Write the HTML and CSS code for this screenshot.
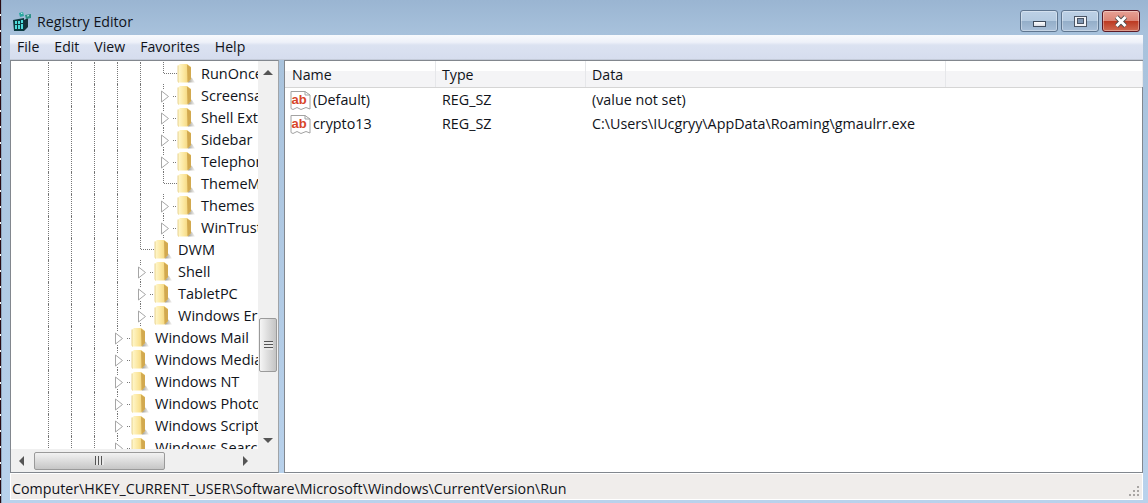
FILE: index.html
```html
<!DOCTYPE html>
<html lang="en">
<head>
<meta charset="utf-8">
<title>Registry Editor</title>
<link rel="stylesheet" href="styles.css">
</head>
<body>
<svg class="defs" aria-hidden="true">
  <defs>
    <linearGradient id="fold" x1="0" y1="0" x2="1" y2="0">
      <stop offset="0" stop-color="#fff8cf"/><stop offset=".5" stop-color="#fbe59a"/><stop offset="1" stop-color="#eccb6e"/>
    </linearGradient>
    <linearGradient id="shade" x1="0" y1="0" x2="1" y2="0">
      <stop offset="0" stop-color="#7f7b70" stop-opacity=".85"/><stop offset="1" stop-color="#b5b2a8" stop-opacity=".15"/>
    </linearGradient>
    <symbol id="folder" viewBox="0 0 18 20" overflow="visible">
      <path d="M11 13 L15 15 L18 19.5 L11 19.5 Z" fill="url(#shade)"/>
      <path d="M1 2.5 L3 1 L10 1 L14 4 L14 16 L10.5 19.5 L1.5 19.5 L1 18 Z" fill="url(#fold)"/>
      <path d="M10 1.5 L14 4.5 L14 16 L10.5 19.5 Z" fill="#d2a94f"/>
      <path d="M1 2.5 L1 18 L1.5 19.5" fill="none" stroke="#e2c878" stroke-width=".8"/>
    </symbol>
    <symbol id="exp" viewBox="0 0 23 22" overflow="visible">
      <path d="M0.5 0 V5 M0.5 19 V22" stroke="#777" stroke-dasharray="1 1" fill="none"/>
      <path d="M10 12.5 H14" stroke="#777" stroke-dasharray="1 1" fill="none"/>
      <path d="M-1.5 7 L5.5 12.5 L-1.5 18 Z" fill="#fff" stroke="#a6a6a6"/>
    </symbol>
    <symbol id="leaf" viewBox="0 0 23 22" overflow="visible">
      <path d="M0.5 0 V11.5 H14" stroke="#777" stroke-dasharray="1 1" fill="none"/>
    </symbol>
    <symbol id="sz" viewBox="0 0 21 21">
      <path d="M1 1.5 H15 L20 5 V19 L16 17.5 L11 19.5 L7 17.5 L3 19.5 L1 18.5 Z" fill="#fff" stroke="#a2a2a2"/>
      <path d="M15 1.5 V5 H20" fill="none" stroke="#a2a2a2"/>
      <text x="1.5" y="13.5" class="ab">ab</text>
    </symbol>
  </defs>
</svg>
<div class="window">
  <header class="titlebar">
    <svg class="appicon" width="21" height="21" viewBox="0 0 21 21">
      <path d="M1 9 L12 7 L12 20 L2 20 Z" fill="#0c3a40"/>
      <path d="M3 10 H5 V13 H3 Z M6 10 H8 V13 H6 Z M9 9 H11 V12 H9 Z M3 14 H5 V18 H3 Z M6 14 H8 V18 H6 Z M9 13 H11 V18 H9 Z" fill="#4fdcdc"/>
      <path d="M12 9 L16 7 L16 16 L12 20 Z" fill="#173238"/>
      <path d="M7 2 L11 1 L12 5 L8 6 Z" fill="#2aa7a0"/>
      <path d="M13 4 L19 3 L19 7 L14 8 Z" fill="#2f8f86"/>
      <path d="M9 2.5 L10.5 2.2 M15 5 L17 4.6" stroke="#c6f0ec"/>
    </svg>
    <span class="title">Registry Editor</span>
    <div class="caption">
      <div class="cbtn"><span class="gmin"></span></div>
      <div class="cbtn"><span class="gmax"></span></div>
      <div class="cbtn close">
        <svg width="14" height="13" viewBox="0 0 14 13"><path d="M2.5 2 L11.5 11 M11.5 2 L2.5 11" stroke="#4c4c4c" stroke-width="4.6"/><path d="M2.5 2 L11.5 11 M11.5 2 L2.5 11" stroke="#fff" stroke-width="3"/></svg>
      </div>
    </div>
  </header>
  <nav class="menubar">
    <span class="mi">File</span><span class="mi">Edit</span><span class="mi">View</span><span class="mi">Favorites</span><span class="mi">Help</span>
  </nav>
  <main class="client">
    <section class="treepane">
      <div class="treetop">
        <div class="tree">
          <div class="row"><i class="g"></i><i class="g"></i><i class="g"></i><i class="g"></i><i class="g"></i><svg class="tw"><use href="#leaf"/></svg><svg class="fo"><use href="#folder"/></svg><span class="lb">RunOnce</span></div>
          <div class="row"><i class="g"></i><i class="g"></i><i class="g"></i><i class="g"></i><i class="g"></i><svg class="tw"><use href="#exp"/></svg><svg class="fo"><use href="#folder"/></svg><span class="lb">Screensavers</span></div>
          <div class="row"><i class="g"></i><i class="g"></i><i class="g"></i><i class="g"></i><i class="g"></i><svg class="tw"><use href="#exp"/></svg><svg class="fo"><use href="#folder"/></svg><span class="lb">Shell Extensions</span></div>
          <div class="row"><i class="g"></i><i class="g"></i><i class="g"></i><i class="g"></i><i class="g"></i><svg class="tw"><use href="#exp"/></svg><svg class="fo"><use href="#folder"/></svg><span class="lb">Sidebar</span></div>
          <div class="row"><i class="g"></i><i class="g"></i><i class="g"></i><i class="g"></i><i class="g"></i><svg class="tw"><use href="#exp"/></svg><svg class="fo"><use href="#folder"/></svg><span class="lb">Telephony</span></div>
          <div class="row"><i class="g"></i><i class="g"></i><i class="g"></i><i class="g"></i><i class="g"></i><svg class="tw"><use href="#leaf"/></svg><svg class="fo"><use href="#folder"/></svg><span class="lb">ThemeManager</span></div>
          <div class="row"><i class="g"></i><i class="g"></i><i class="g"></i><i class="g"></i><i class="g"></i><svg class="tw"><use href="#exp"/></svg><svg class="fo"><use href="#folder"/></svg><span class="lb">Themes</span></div>
          <div class="row"><i class="g"></i><i class="g"></i><i class="g"></i><i class="g"></i><i class="g"></i><svg class="tw"><use href="#exp"/></svg><svg class="fo"><use href="#folder"/></svg><span class="lb">WinTrust</span></div>
          <div class="row"><i class="g"></i><i class="g"></i><i class="g"></i><i class="g"></i><svg class="tw"><use href="#leaf"/></svg><svg class="fo"><use href="#folder"/></svg><span class="lb">DWM</span></div>
          <div class="row"><i class="g"></i><i class="g"></i><i class="g"></i><i class="g"></i><svg class="tw"><use href="#exp"/></svg><svg class="fo"><use href="#folder"/></svg><span class="lb">Shell</span></div>
          <div class="row"><i class="g"></i><i class="g"></i><i class="g"></i><i class="g"></i><svg class="tw"><use href="#exp"/></svg><svg class="fo"><use href="#folder"/></svg><span class="lb">TabletPC</span></div>
          <div class="row"><i class="g"></i><i class="g"></i><i class="g"></i><i class="g"></i><svg class="tw"><use href="#exp"/></svg><svg class="fo"><use href="#folder"/></svg><span class="lb">Windows Error Reporting</span></div>
          <div class="row"><i class="g"></i><i class="g"></i><i class="g"></i><svg class="tw"><use href="#exp"/></svg><svg class="fo"><use href="#folder"/></svg><span class="lb">Windows Mail</span></div>
          <div class="row"><i class="g"></i><i class="g"></i><i class="g"></i><svg class="tw"><use href="#exp"/></svg><svg class="fo"><use href="#folder"/></svg><span class="lb">Windows Media Player</span></div>
          <div class="row"><i class="g"></i><i class="g"></i><i class="g"></i><svg class="tw"><use href="#exp"/></svg><svg class="fo"><use href="#folder"/></svg><span class="lb">Windows NT</span></div>
          <div class="row"><i class="g"></i><i class="g"></i><i class="g"></i><svg class="tw"><use href="#exp"/></svg><svg class="fo"><use href="#folder"/></svg><span class="lb">Windows Photo Viewer</span></div>
          <div class="row"><i class="g"></i><i class="g"></i><i class="g"></i><svg class="tw"><use href="#exp"/></svg><svg class="fo"><use href="#folder"/></svg><span class="lb">Windows Script Host</span></div>
          <div class="row"><i class="g"></i><i class="g"></i><i class="g"></i><svg class="tw"><use href="#exp"/></svg><svg class="fo"><use href="#folder"/></svg><span class="lb">Windows Search</span></div>
        </div>
        <div class="vscroll">
          <span class="arrow up"></span>
          <div class="vtrack"><div class="vthumb"><span class="grip-h"></span></div></div>
          <span class="arrow down"></span>
        </div>
      </div>
      <div class="hscroll">
        <span class="arrow left"></span>
        <div class="hthumb"><span class="grip-v"></span></div>
        <span class="arrow right"></span>
      </div>
    </section>
    <section class="listpane">
      <div class="lhead">
        <span class="hc c1">Name</span><span class="hc c2">Type</span><span class="hc c3">Data</span><span class="hc c4"></span>
      </div>
      <div class="lrow"><span class="vc c1"><svg class="szi"><use href="#sz"/></svg>(Default)</span><span class="vc c2">REG_SZ</span><span class="vc c3">(value not set)</span></div>
      <div class="lrow"><span class="vc c1"><svg class="szi"><use href="#sz"/></svg>crypto13</span><span class="vc c2">REG_SZ</span><span class="vc c3">C:\Users\IUcgryy\AppData\Roaming\gmaulrr.exe</span></div>
    </section>
  </main>
  <footer class="status">
    <span>Computer\HKEY_CURRENT_USER\Software\Microsoft\Windows\CurrentVersion\Run</span>
    <svg class="sgrip" width="12" height="12" viewBox="0 0 12 12"><path d="M9 0 H11 V2 H9 Z M5 4 H7 V6 H5 Z M9 4 H11 V6 H9 Z M1 8 H3 V10 H1 Z M5 8 H7 V10 H5 Z M9 8 H11 V10 H9 Z" fill="#a9a6a4"/></svg>
  </footer>
</div>
</body>
</html>
```
FILE: styles.css
```css
* { box-sizing: border-box; }
html, body { margin: 0; padding: 0; }
body {
  width: 1148px;
  height: 503px;
  overflow: hidden;
  font-family: "Open Sans", "Noto Sans", sans-serif;
  font-size: 14px;
  color: #111;
  background: repeating-linear-gradient(180deg, #2a0a12 0 14px, #f4f4f4 14px 16px);
}
.defs { position: absolute; width: 0; height: 0; }
.ab { font: 700 13px "Liberation Sans", sans-serif; fill: #d8452a; }

.window {
  width: 1147px;
  height: 503px;
  margin-left: 1px;
  padding: 0 5px 3px 8px;
  display: flex;
  flex-direction: column;
  background: linear-gradient(180deg, #9ab5d2 0, #a8c2dc 35px, #b9d2ec 503px);
  border-left: 1px solid #8fa6bd;
}

.titlebar { height: 35px; flex: none; display: flex; align-items: flex-start; }
.appicon { margin: 11px 0 0 2px; flex: none; }
.title { margin: 12px 0 0 4px; font-size: 14.2px; line-height: 20px; color: #10131a; }
.caption { margin: 10px 3px 0 auto; display: flex; gap: 3px; }
.cbtn {
  width: 38px; height: 22px;
  display: flex; align-items: center; justify-content: center;
  border: 1px solid #5f7690;
  border-radius: 3px;
  box-shadow: inset 0 0 0 1px rgba(255,255,255,.35);
  background: linear-gradient(180deg, #bdd1e6 0, #b4cae0 48%, #94aec9 52%, #a8bfd8 100%);
}
.close {
  border-color: #5c1a26;
  background: linear-gradient(180deg, #e6a195 0, #dc8576 48%, #bc3a22 52%, #cf6a52 100%);
}
.gmin {
  width: 13px; height: 6px; margin-top: 5px;
  background: linear-gradient(#fff, #d8dde6);
  border: 1px solid #3f4b5c;
}
.gmax {
  width: 13px; height: 11px;
  border: 1px solid #4a5565;
  background: #f1f3f7;
  display: flex; align-items: center; justify-content: center;
}
.gmax::after { content: ""; width: 5px; height: 4px; background: #7f97b4; border: 1px solid #4a5565; }

.menubar {
  height: 25px; flex: none;
  display: flex; align-items: center;
  padding-left: 7px;
  gap: 15px;
  background: linear-gradient(180deg, #f8fafd 0, #eef1f9 30%, #dbe2f1 42%, #d6ddee 100%);
  border-bottom: 1px solid #c3cad8;
}
.mi { font-size: 14.1px; line-height: 20px; color: #10131a; }

.client { flex: 1; min-height: 0; display: flex; gap: 5px; }

.treepane {
  width: 269px; flex: none;
  display: flex; flex-direction: column;
  border: 1px solid #82878e;
  border-right-color: #a0a4a8;
  background: #fff;
}
.treetop { flex: 1; min-height: 0; display: flex; }
.tree { width: 247px; flex: none; overflow: hidden; padding: 1px 0 0 37px; }
.row { display: flex; height: 22px; align-items: stretch; white-space: nowrap; }
.g { width: 23px; flex: none; border-left: 1px dotted #777; }
.tw { width: 23px; height: 22px; flex: none; overflow: visible; }
.fo { width: 18px; height: 20px; flex: none; margin: 1px 0 0 -9px; }
.lb { margin-left: 6px; font-size: 14.5px; line-height: 23px; color: #10131a; }

.vscroll {
  width: 20px; flex: none;
  display: flex; flex-direction: column;
  background: #f0f0f0;
  align-items: center;
}
.vtrack { flex: 1; width: 100%; padding-top: 239px; }
.vthumb {
  width: 18px; height: 54px; margin-left: 1px;
  display: flex; align-items: center; justify-content: center;
  border: 1px solid #9a9a9a;
  border-radius: 2px;
  background: linear-gradient(90deg, #f5f5f5, #dcdcdc 50%, #c4c4c4);
}
.grip-h { width: 9px; height: 9px; background: repeating-linear-gradient(180deg, #555 0 1px, #e8e8e8 1px 3px); }
.arrow { flex: none; width: 0; height: 0; }
.up { margin-top: 9px; margin-bottom: 4px; border: 5px solid transparent; border-top: 0; border-bottom: 5px solid #555; }
.down { margin-top: 4px; margin-bottom: 6px; border: 5px solid transparent; border-bottom: 0; border-top: 5px solid #555; }

.hscroll {
  height: 23px; flex: none;
  display: flex; align-items: center;
  background: #f0f0f0;
}
.left { margin-left: 8px; border: 5px solid transparent; border-left: 0; border-right: 5px solid #555; }
.hthumb {
  width: 131px; height: 18px; margin-left: 10px;
  display: flex; align-items: center; justify-content: center;
  border: 1px solid #9a9a9a;
  border-radius: 2px;
  background: linear-gradient(180deg, #f2f2f2, #dcdcdc 50%, #c6c6c6);
}
.grip-v { width: 9px; height: 9px; background: repeating-linear-gradient(90deg, #555 0 1px, #e8e8e8 1px 3px); }
.right { margin-left: 78px; border: 5px solid transparent; border-right: 0; border-left: 5px solid #555; }

.listpane {
  flex: 1; min-width: 0;
  border: 1px solid #82878e;
  background: #fff;
}
.lhead {
  display: grid;
  grid-template-columns: 151px 150px 360px 197px;
  height: 27px;
  border-bottom: 1px solid #d5d5d5;
  background: linear-gradient(180deg, #fff 0, #fff 37%, #f4f4f6 38%, #f4f4f6 100%);
}
.hc { padding: 2px 0 0 6px; font-size: 14.2px; line-height: 24px; border-right: 1px solid #e6e7ea; color: #10131a; }
.hc.c1 { padding-left: 7px; }
.lrow {
  display: grid;
  grid-template-columns: 151px 150px 360px;
  height: 24px;
  align-items: center;
}
.vc { padding-left: 6px; font-size: 14.3px; line-height: 24px; color: #10131a; white-space: nowrap; display: flex; align-items: center; }
.c1.vc { padding-left: 5px; }
.szi { width: 21px; height: 21px; flex: none; margin-right: 2px; }

.status {
  height: 27px; flex: none;
  display: flex; align-items: center; justify-content: space-between;
  padding: 3px 2px 0 1px;
  background: #f0edeb;
  border: 1px solid #fff;
  font-size: 14.25px;
  color: #10131a;
}
.sgrip { align-self: flex-end; margin-bottom: 1px; }
```
